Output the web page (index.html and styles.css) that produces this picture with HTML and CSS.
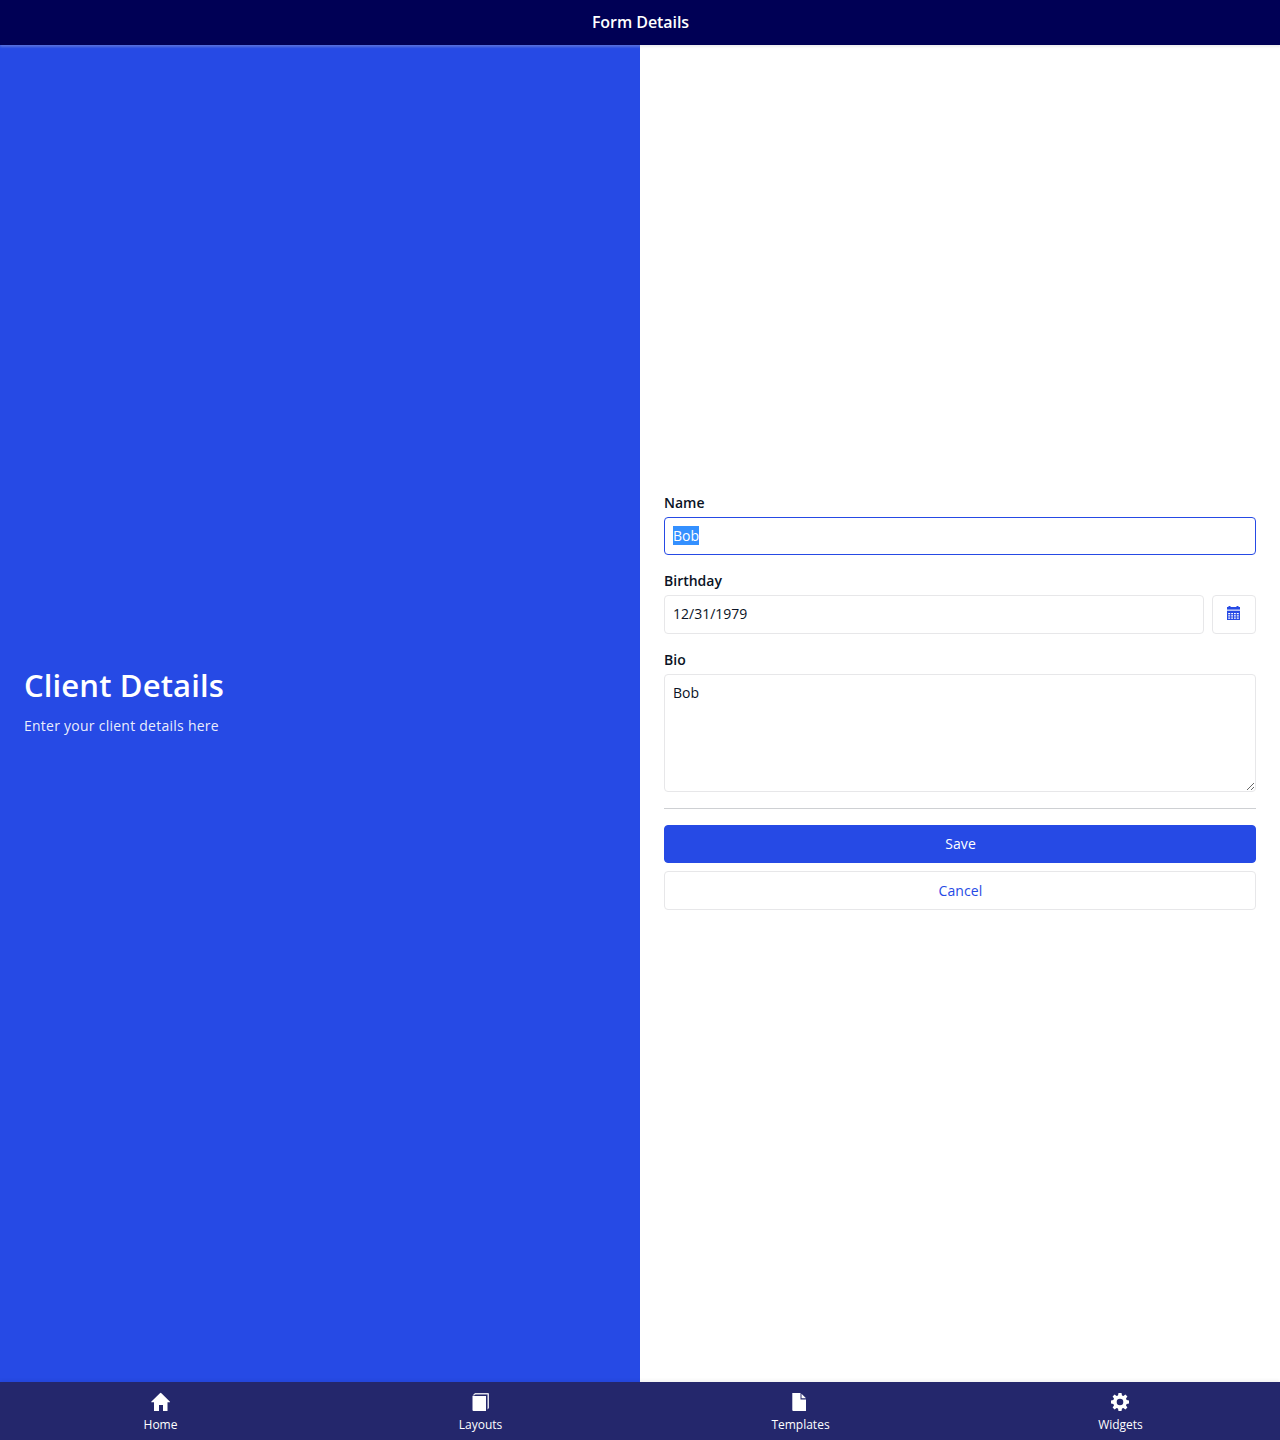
FILE: index.html
```html
<!DOCTYPE html>
<html lang="en">
<head>
<meta charset="utf-8">
<title>Form Details</title>
<link rel="stylesheet" href="styles.css">
</head>
<body>
<div class="app">
  <header class="topbar"><h1 class="topbar-title">Form Details</h1></header>
  <main class="content">
    <section class="intro">
      <h2 class="intro-title">Client Details</h2>
      <p class="intro-text">Enter your client details here</p>
    </section>
    <form class="form">
      <div class="field">
        <label class="label" for="name">Name</label>
        <input class="control" id="name" type="text" value="Bob" autocomplete="off" spellcheck="false">
      </div>
      <div class="field">
        <label class="label" for="birthday">Birthday</label>
        <div class="date-row">
          <input class="control" id="birthday" type="text" value="12/31/1979">
          <button class="btn btn-icon" type="button" aria-label="Show date picker">
            <svg width="14" height="14" viewBox="0 0 14 14" fill="currentColor"><path d="M0 1H1.5V0H3.5V1H9.5V0H11.5V1H13V3H0Z"/><path opacity=".6" d="M0 3H13V4H0Z"/><path opacity=".3" d="M0 4H13V5H0Z"/><path fill-rule="evenodd" d="M0 5H13V14H0ZM1.2 7V8.2H3.2V7ZM4.2 7V8.2H6V7ZM7 7V8.2H8.8V7ZM9.8 7V8.2H11.8V7ZM1.2 9.2V10.4H3.2V9.2ZM4.2 9.2V10.4H6V9.2ZM7 9.2V10.4H8.8V9.2ZM9.8 9.2V10.4H11.8V9.2ZM1.2 11.5V12.7H3.2V11.5ZM4.2 11.5V12.7H6V11.5ZM7 11.5V12.7H8.8V11.5ZM9.8 11.5V12.7H11.8V11.5Z"/></svg>
          </button>
        </div>
      </div>
      <div class="field">
        <label class="label" for="bio">Bio</label>
        <textarea class="control control-area" id="bio" spellcheck="false">Bob</textarea>
      </div>
      <hr class="divider">
      <div class="actions">
        <button class="btn btn-primary" type="button">Save</button>
        <button class="btn" type="button">Cancel</button>
      </div>
    </form>
  </main>
  <nav class="tabs">
    <a class="tab">
      <svg width="20" height="20" viewBox="0 0 20 20" fill="currentColor"><path d="M10.7.8Q11 .8 11.4 1.2L20 9.8V10.2H17.5V19H13V13H9V19H4V10.2H1.2V9.8L9.9 1.2Q10.3.8 10.7.8Z"/></svg>
      <span class="tab-label">Home</span>
    </a>
    <a class="tab">
      <svg width="20" height="20" viewBox="0 0 20 20" fill="currentColor"><path d="M2.5 4H16V19H3.5Q2.5 19 2.5 18Z"/><path d="M2.5 3.6L5 1H18Q19 1 19 2V16L17.5 17.5V2.5H5.5L4.2 3.6Z" opacity=".85"/></svg>
      <span class="tab-label">Layouts</span>
    </a>
    <a class="tab">
      <svg width="20" height="20" viewBox="0 0 20 20" fill="currentColor"><path d="M2.3 1H10.5V7.5H16V19H3.3Q2.3 19 2.3 18ZM11.5 1.8L15.8 6V6.3H11.5Z"/></svg>
      <span class="tab-label">Templates</span>
    </a>
    <a class="tab">
      <svg width="20" height="20" viewBox="0 0 20 20" fill="currentColor"><path fill-rule="evenodd" d="M8.5 1H11.5L12 3.4L13.4 4L15.4 2.6L17.4 4.6L16 6.6L16.6 8L19 8.5V11.5L16.6 12L16 13.4L17.4 15.4L15.4 17.4L13.4 16L12 16.6L11.5 19H8.5L8 16.6L6.6 16L4.6 17.4L2.6 15.4L4 13.4L3.4 12L1 11.5V8.5L3.4 8L4 6.6L2.6 4.6L4.6 2.6L6.6 4L8 3.4ZM10 6.7A3.3 3.3 0 1 0 10 13.3A3.3 3.3 0 1 0 10 6.7Z"/></svg>
      <span class="tab-label">Widgets</span>
    </a>
  </nav>
</div>
<script src="script.js"></script>
</body>
</html>
```
FILE: script.js
```js
const nameInput = document.getElementById("name");
nameInput.focus();
nameInput.select();
```
FILE: styles.css
```css
* { box-sizing: border-box; }

body {
  margin: 0;
  color: #0a1325;
  background: #fff;
  font: 14px/20px "Open Sans", sans-serif;
}

.app {
  display: flex;
  flex-direction: column;
  height: 100vh;
}

.topbar {
  display: flex;
  align-items: center;
  justify-content: center;
  flex: 0 0 45px;
  padding: 0 0 2px 1px;
  z-index: 1;
  background: #000055;
  color: #fff;
  box-shadow: 0 2px 2px rgba(194, 196, 201, .3);
}

.topbar-title {
  margin: 0;
  font-size: 16px;
  font-weight: 600;
  line-height: 24px;
  letter-spacing: -.06px;
}

.content {
  display: grid;
  grid-template-columns: 1fr 1fr;
  flex: 1;
  min-height: 0;
}

.intro,
.form {
  display: flex;
  flex-direction: column;
  justify-content: center;
  padding: 0 24px 24.5px;
}

.intro {
  padding-bottom: 29px;
  background: #264ae5;
  color: #fff;
}

.intro-title {
  margin: 0 0 9px;
  font-size: 31px;
  font-weight: 600;
  line-height: 44px;
  letter-spacing: .14px;
}

.intro-text {
  margin: 0;
  color: rgba(255, 255, 255, .92);
  letter-spacing: .25px;
}

.field {
  display: flex;
  flex-direction: column;
  gap: 4px;
  margin-bottom: 16px;
}

.label { font-weight: 600; }

.control {
  width: 100%;
  height: 38.5px;
  margin: 0;
  padding: 7px 8px 9px;
  border: 1px solid #e7e7e9;
  border-radius: 4px;
  outline: 0;
  background: #fff;
  color: #0a1325;
  font: inherit;
}

.control:focus { border-color: #264ae5; }

.control::selection {
  background: rgba(51, 144, 255, .996);
  color: #fff;
}

.control-area {
  display: block;
  height: 118px;
  padding: 8px;
  resize: vertical;
}

.date-row { display: flex; gap: 8px; }

.btn {
  display: flex;
  align-items: center;
  justify-content: center;
  height: 38.5px;
  padding: 0 7px 0 8px;
  border: 1px solid #e7e7e9;
  border-radius: 4px;
  background: #fff;
  color: #264ae5;
  font: inherit;
  letter-spacing: .1px;
}

.btn-primary {
  border-color: #264ae5;
  background: #264ae5;
  color: #fff;
}

.btn-icon {
  flex: 0 0 44px;
  padding: 0 8px 3.5px;
}

.divider {
  width: 100%;
  height: 1px;
  margin: 0 0 16px;
  border: 0;
  background: #ced0d3;
}

.actions {
  display: flex;
  flex-direction: column;
  gap: 8px;
}

.tabs {
  display: grid;
  grid-template-columns: repeat(4, 1fr);
  flex: 0 0 58px;
  z-index: 1;
  background: #24276c;
  color: #fff;
  box-shadow: 0 -1px 4px rgba(0, 0, 40, .08);
}

.tab {
  display: flex;
  flex-direction: column;
  align-items: center;
  gap: 4px;
  padding-top: 10px;
  font-size: 12px;
  line-height: 18px;
}

.tab-label { padding-left: 1px; }
```
